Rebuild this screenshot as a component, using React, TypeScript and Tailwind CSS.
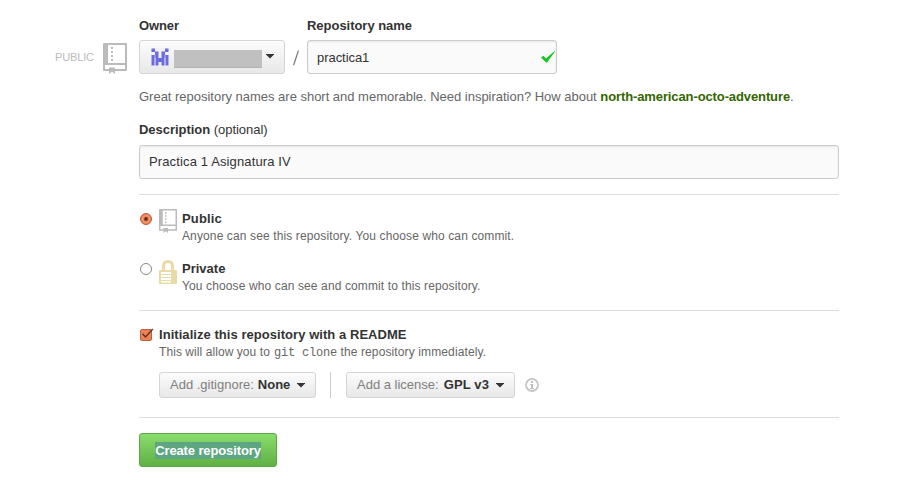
import type { ReactNode } from "react";

function RepoIcon({ className }: { className: string }) {
  return (
    <svg className={className} viewBox="0 0 24 31" preserveAspectRatio="none" fill="#bbbbbb">
      <path
        fillRule="evenodd"
        d="M1 0H23Q24 0 24 1V27Q24 28 23 28H12V31L9 28.7L6 31V28H1Q0 28 0 27V1Q0 0 1 0ZM5 2V20H22V2ZM2 22V26H6V24.5H12V26H22V22Z"
      />
      <path d="M8 4h2v2h-2zM8 8h2v2h-2zM8 12h2v2h-2zM8 16h2v2h-2z" />
    </svg>
  );
}

function LockIcon() {
  return (
    <svg className="mt-px h-6 w-[18px]" viewBox="0 0 18 24" fill="#e9dba5">
      <path
        fillRule="evenodd"
        d="M3 10V6Q3 0 9 0T15 6V10H17Q18 10 18 11V23Q18 24 17 24H1Q0 24 0 23V11Q0 10 1 10ZM6 10H12V6Q12 3 9 3T6 6ZM2 12V14H12V12ZM2 15V17H12V15ZM2 18V20H12V18ZM2 21V22.5H12V21Z"
      />
    </svg>
  );
}

function Identicon() {
  return (
    <svg className="ml-[11px] h-[18px] w-[18px]" viewBox="0 0 18 18" fill="#6c6ce0">
      <rect width="18" height="18" fill="#f0f0f0" />
      <path d="M.5 .5H4V4H.5ZM14 .5H17.5V4H14ZM4 3.5H7.5V7H4ZM10.5 3.5H14V7H10.5ZM.5 7H3.5V17.5H.5ZM4.5 7H7.5V17.5H4.5ZM7.5 10H10.5V14H7.5ZM10.5 7H13.5V17.5H10.5ZM14.5 7H17.5V17.5H14.5Z" />
      <path d="M3.5 7H4.5V10H3.5ZM13.5 7H14.5V10H13.5Z" />
    </svg>
  );
}

function Caret({ className = "" }: { className?: string }) {
  return (
    <svg className={"h-[5px] w-2 shrink-0 " + className} viewBox="0 0 8 5">
      <path d="M0 0H8V.5L4 4.5L0 .5Z" fill="#333" />
    </svg>
  );
}

const buttonLook =
  "flex items-center rounded-[3px] border border-[#d5d5d5] bg-linear-to-b from-[#fcfcfc] to-[#e8e8e8]";

function SmallButton({ label, value, width, valueLook = "ml-1" }: { label: string; value: string; width: string; valueLook?: string }) {
  return (
    <button type="button" className={buttonLook + " h-[26px] pl-[10px] text-[13px] " + width}>
      <span className="text-[#808080]">{label}</span>
      <b className={valueLook}>{value}</b>
      <Caret className="ml-[7px]" />
    </button>
  );
}

function Option({ mark, icon, title, children }: { mark: ReactNode; icon: ReactNode; title: ReactNode; children: ReactNode }) {
  return (
    <label className="flex h-[50px]">
      <span className="w-5 pt-[4px] pl-[1px]">{mark}</span>
      <span className="w-[23px]">{icon}</span>
      <span>
        <b className="block h-[18px] pt-px leading-[18px] tracking-[0.15px]">{title}</b>
        <span className="block text-[12px] leading-[18px] tracking-[0.12px] text-[#666]">{children}</span>
      </span>
    </label>
  );
}

export default function App() {
  return (
    <main className="flex h-[504px] w-[907px] bg-white font-['Liberation_Sans',Arial,sans-serif] text-[13px] text-[#333]">
      <aside className="flex h-[34px] w-[139px] shrink-0 pl-[55px] pt-[43px]">
        <span className="mt-[6px] w-12 text-[11px] leading-4 tracking-[-0.15px] text-[#bbb]">PUBLIC</span>
        <RepoIcon className="h-[31px] w-6 shrink-0" />
      </aside>
      <form className="w-[700px] pt-[17px]">
        <div className="flex">
          <div className="w-[146px]">
            <b className="block h-[23px] leading-[18px] tracking-[-0.1px]">Owner</b>
            <button type="button" className={buttonLook + " h-[34px] w-full"}>
              <Identicon />
              <span className="ml-[5px] mt-[3px] h-[18px] w-[88px] border-b border-[#b1b1b1] bg-[#c0c0c0]" />
              <Caret className="ml-[4px] -mt-[2px]" />
            </button>
          </div>
          <svg className="mt-[33px] h-4 w-[22px]" viewBox="0 0 22 16">
            <path d="M8.6 15.2L13.4 0.6" stroke="#777" strokeWidth="1.2" />
          </svg>
          <div className="w-[250px]">
            <b className="block h-[23px] leading-[18px] tracking-[-0.03px]">Repository name</b>
            <div className="flex h-[34px] items-center justify-between rounded-[3px] border border-[#ccc] bg-[#fafafa] pl-[9px] pr-[1px] shadow-[inset_0_1px_2px_rgba(0,0,0,0.075)]">
              <span className="mt-px tracking-[-0.05px]">practica1</span>
              <svg className="h-3 w-[14px]" viewBox="0 0 14 12" fill="#18c424">
                <path d="M0 6.4L2.5 4.8L5.1 7.6L13.5 0L14 .5L5.7 12Z" />
              </svg>
            </div>
          </div>
        </div>
        <p className="mt-[14px] h-[18px] whitespace-nowrap leading-[18px] tracking-[-0.015px] text-[#666]">
          Great repository names are short and memorable. Need inspiration? How about{" "}
          <b className="tracking-[-0.11px] text-[#336600]">north-american-octo-adventure</b>.
        </p>
        <div className="mt-[15px] h-[24px] leading-[18px]">
          <b className="tracking-[-0.03px]">Description</b> <span className="tracking-[-0.05px]">(optional)</span>
        </div>
        <div className="flex h-[34px] items-center rounded-[3px] border border-[#ccc] bg-[#fafafa] pl-[9px] tracking-[0.13px] shadow-[inset_0_1px_2px_rgba(0,0,0,0.075)]">
          Practica 1 Asignatura IV
        </div>
        <section className="mt-[15px] h-[116px] border-t border-[#ddd] pt-[14px]">
          <Option
            title="Public"
            icon={<RepoIcon className="h-6 w-[18px]" />}
            mark={
              <svg className="h-3 w-3" viewBox="0 0 12 12">
                <circle cx="6" cy="6" r="5.5" fill="#ef8055" stroke="#b9623f" />
                <circle cx="6" cy="6" r="3.5" fill="none" stroke="#f5a17e" />
                <circle cx="6" cy="6" r="1.9" fill="#63301f" />
              </svg>
            }
          >
            Anyone can see this repository. You choose who can commit.
          </Option>
          <Option
            title={<span className="tracking-normal">Private</span>}
            icon={<LockIcon />}
            mark={
              <svg className="h-3 w-3" viewBox="0 0 12 12">
                <circle cx="6" cy="6" r="5.5" fill="white" stroke="#888" />
              </svg>
            }
          >
            You choose who can see and commit to this repository.
          </Option>
        </section>
        <section className="h-[107px] border-t border-[#ddd] pt-[15px]">
          <div className="flex h-[46px]">
            <svg className="mt-[1px] h-[14px] w-5 shrink-0" viewBox="0 0 20 14">
              <rect x="1.5" y="2.5" width="11" height="11" rx="1.5" fill="#ef8055" stroke="#b9623f" />
              <path d="M3.5 6.7L6.5 10L13.8 2" fill="none" stroke="#653523" strokeWidth="1.5" />
            </svg>
            <div>
              <b className="block h-[17px] leading-[18px] tracking-[0.05px]">Initialize this repository with a README</b>
              <span className="flex h-[18px] whitespace-pre text-[12px] leading-[18px] text-[#666]">
                <span className="w-[115px] tracking-[0.07px]">This will allow you to </span>
                <code className="w-[63px] pt-px font-['Liberation_Mono',monospace] text-[12px] tracking-[-0.2px]">git clone</code>
                <span className="tracking-[0.12px]"> the repository immediately.</span>
              </span>
            </div>
          </div>
          <div className="flex items-center pl-5">
            <SmallButton label="Add .gitignore:" value="None" width="w-[157px]" />
            <span className="ml-[14px] mr-[15px] h-[26px] w-px bg-[#ccc]" />
            <SmallButton label="Add a license:" value="GPL v3" width="w-[169px]" valueLook="ml-[5px] tracking-[0.15px]" />
            <svg className="ml-[10px] h-[14px] w-[14px]" viewBox="0 0 14 14" fill="#bfbfbf">
              <circle cx="7" cy="7" r="6" fill="none" stroke="#c6c6c6" strokeWidth="1.8" />
              <path d="M6 3H8V5H6ZM5 6H8V10H9V11H5V10H6V7H5Z" />
            </svg>
          </div>
        </section>
        <section className="border-t border-[#ddd] pt-[15px]">
          <button type="button" className="flex h-[34px] w-[138px] items-center justify-center rounded-[3px] border border-[#5ca941] bg-linear-to-b from-[#8add6d] to-[#60b044] font-bold text-white">
            <span className="h-[17px] whitespace-nowrap bg-[#5da681] leading-[17px] tracking-[-0.12px]">Create repository</span>
          </button>
        </section>
      </form>
    </main>
  );
}
